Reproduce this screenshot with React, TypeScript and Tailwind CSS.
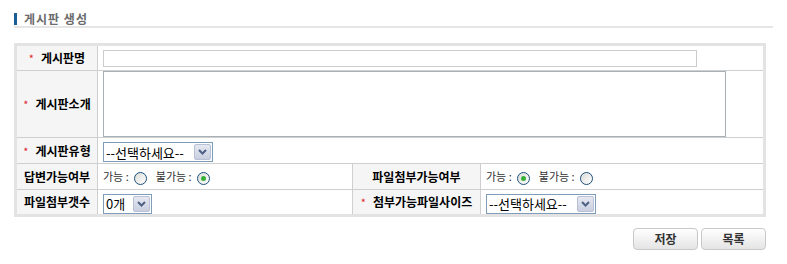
import React from 'react';

const font = { fontFamily: '"Noto Sans CJK KR", "Noto Sans", sans-serif' };

function Star() {
    return <span className="text-[#e0262b] font-normal mr-[7px] text-[11px]">*</span>;
}

function Select({ label, width }: { label: string; width: string }) {
    return (
        <div className={`inline-flex items-center h-[20px] border border-[#7f9db9] bg-white ${width}`}>
            <span className="flex-1 pl-[2px] text-[13px] leading-none text-black whitespace-nowrap">{label}</span>
            <span className="w-[17px] h-[16px] mr-[1px] flex items-center justify-center rounded-[2px] border border-[#b9c1d6] bg-gradient-to-b from-[#e6e9f2] to-[#c9cfe0]">
                <svg width="9" height="6" viewBox="0 0 9 6">
                    <path d="M1 1 L4.5 4.5 L8 1" stroke="#4d6185" strokeWidth="2" fill="none" />
                </svg>
            </span>
        </div>
    );
}

function Radio({ checked }: { checked?: boolean }) {
    return (
        <span className="inline-flex w-[13px] h-[13px] rounded-full border border-[#1c5180] bg-gradient-to-br from-[#dcdcd6] to-white items-center justify-center align-middle">
            {checked && <span className="w-[5px] h-[5px] rounded-full bg-[#36b136]" />}
        </span>
    );
}

function RadioPair({ yes }: { yes: boolean }) {
    return (
        <div className="flex items-center text-[11px] text-[#333]">
            <span>가능 :</span>
            <span className="ml-[5px]"><Radio checked={yes} /></span>
            <span className="ml-[9px]">불가능 :</span>
            <span className="ml-[5px]"><Radio checked={!yes} /></span>
        </div>
    );
}

const th = 'bg-[#f5f5f5] border border-[#cfcfcf] text-center text-[12px] font-bold text-black whitespace-nowrap';
const td = 'border border-[#cfcfcf] pl-[5px] align-middle';

export default function App() {
    return (
        <div className="w-[787px] h-[264px] bg-white pl-[14px] pt-[13px]" style={font}>
            <div className="flex items-center h-[12px]">
                <span className="w-[3px] h-[12px] bg-[#1b5d96]" />
                <span className="ml-[7px] text-[12px] font-bold text-[#6b6b6b] tracking-[1px] leading-none">게시판 생성</span>
            </div>
            <div className="mt-[1px] h-[2px] w-[759px] bg-[#e6e6e6]" />

            <table className="mt-[15px] w-[752px] table-fixed border-collapse border-[3px] border-[#e3e3e3]">
                <colgroup>
                    <col className="w-[82px]" />
                    <col className="w-[255px]" />
                    <col className="w-[128px]" />
                    <col />
                </colgroup>
                <tbody>
                    <tr className="h-[26px]">
                        <th className={th}><Star />게시판명</th>
                        <td className={td} colSpan={3}>
                            <div className="w-[594px] h-[17px] border border-[#cccccc] bg-white" />
                        </td>
                    </tr>
                    <tr className="h-[67px]">
                        <th className={th}><Star />게시판소개</th>
                        <td className={td} colSpan={3}>
                            <div className="w-[623px] h-[66px] border border-[#a9b0b6] bg-white" />
                        </td>
                    </tr>
                    <tr className="h-[26px]">
                        <th className={th}><Star />게시판유형</th>
                        <td className={td} colSpan={3}>
                            <Select label="--선택하세요--" width="w-[110px]" />
                        </td>
                    </tr>
                    <tr className="h-[26px]">
                        <th className={th}>답변가능여부</th>
                        <td className={td}><RadioPair yes={false} /></td>
                        <th className={th}>파일첨부가능여부</th>
                        <td className={td}><RadioPair yes={true} /></td>
                    </tr>
                    <tr className="h-[26px]">
                        <th className={th}>파일첨부갯수</th>
                        <td className={td}><Select label="0개" width="w-[49px]" /></td>
                        <th className={th}><Star />첨부가능파일사이즈</th>
                        <td className={td}><Select label="--선택하세요--" width="w-[110px]" /></td>
                    </tr>
                </tbody>
            </table>

            <div className="w-[752px] flex justify-end gap-[3px] mt-[11px]">
                {['저장', '목록'].map(b => (
                    <button
                        key={b}
                        className="w-[65px] h-[22px] rounded-[4px] border border-[#c8c8c8] bg-gradient-to-b from-white to-[#e4e4e4] text-[12px] font-bold text-[#333] leading-none"
                    >
                        {b}
                    </button>
                ))}
            </div>
        </div>
    );
}
